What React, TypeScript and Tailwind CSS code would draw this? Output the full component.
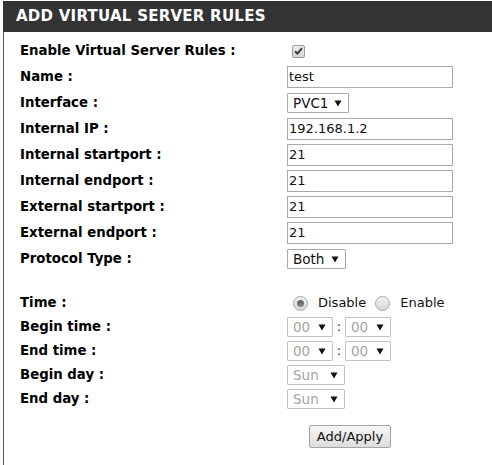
import React from 'react';

const font = { fontFamily: '"DejaVu Sans", Verdana, sans-serif' };

const Arrow = () => (
  <svg width="8" height="7" viewBox="0 0 8 7" className="shrink-0">
    <path d="M0.5 0.5 L7.5 0.5 L4 6.5 Z" fill="#111" />
  </svg>
);

const TextBox = ({ value }: { value: string }) => (
  <div className="w-[166px] h-[22px] border border-[#a9a9a9] bg-white pl-[1px] flex items-center text-[13px] text-[#111]">
    {value}
  </div>
);

const Select = ({
  value,
  width,
  disabled,
}: {
  value: string;
  width: string;
  disabled?: boolean;
}) => (
  <div
    className={`${width} h-[20px] border bg-white pl-[5px] pr-[6px] flex items-center justify-between text-[13.5px] rounded-[1px] ${
      disabled ? 'border-[#c2c2c2] text-[#a8a39c]' : 'border-[#a9a9a9] text-[#111]'
    }`}
  >
    <span>{value}</span>
    <Arrow />
  </div>
);

const Radio = ({ checked }: { checked?: boolean }) => (
  <div className="w-[15px] h-[15px] rounded-full border border-[#a8a8a8] bg-gradient-to-b from-[#f4f4f4] to-[#d6d6d6] flex items-center justify-center">
    {checked && <div className="w-[7px] h-[7px] rounded-full bg-gradient-to-b from-[#5a5a5a] to-[#8a8a8a]" />}
  </div>
);

const Row = ({
  label,
  tall = true,
  children,
}: {
  label: string;
  tall?: boolean;
  children?: React.ReactNode;
}) => (
  <div className={`flex items-center ${tall ? 'h-[26px]' : 'h-[24px]'}`}>
    <div className="w-[267px] font-bold text-[13.3px] text-black">{label}</div>
    <div className="flex items-center">{children}</div>
  </div>
);

export default function App() {
  return (
    <div className="w-[492px] h-[465px] bg-white pt-[1px] pl-[3px] overflow-hidden" style={font}>
      <div className="h-[31px] bg-[#333333] flex items-center pl-[13px]">
        <span className="text-white font-bold text-[15px] tracking-[0.25px]">ADD VIRTUAL SERVER RULES</span>
      </div>
      <div className="border-l border-[#555] h-[433px] pl-[16px] pt-[6px]">
        <Row label="Enable Virtual Server Rules :">
          <div className="ml-[5px] w-[13px] h-[13px] border border-[#9c9c9c] rounded-[2px] bg-gradient-to-b from-[#ededed] to-[#d4d4d4] flex items-center justify-center">
            <svg width="9" height="8" viewBox="0 0 9 8">
              <path d="M1 4.2 L3.4 6.6 L8 1.2" stroke="#3a3a3a" strokeWidth="2" fill="none" />
            </svg>
          </div>
        </Row>
        <Row label="Name :">
          <TextBox value="test" />
        </Row>
        <Row label="Interface :">
          <Select value="PVC1" width="w-[62px]" />
        </Row>
        <Row label="Internal IP :">
          <TextBox value="192.168.1.2" />
        </Row>
        <Row label="Internal startport :">
          <TextBox value="21" />
        </Row>
        <Row label="Internal endport :">
          <TextBox value="21" />
        </Row>
        <Row label="External startport :">
          <TextBox value="21" />
        </Row>
        <Row label="External endport :">
          <TextBox value="21" />
        </Row>
        <Row label="Protocol Type :">
          <Select value="Both" width="w-[59px]" />
        </Row>

        <div className="h-[19px]" />

        <Row label="Time :" tall={false}>
          <div className="ml-[6px] flex items-center text-[13px] text-[#111]">
            <Radio checked />
            <span className="ml-[10px]">Disable</span>
            <span className="ml-[9px]">
              <Radio />
            </span>
            <span className="ml-[10px]">Enable</span>
          </div>
        </Row>
        <Row label="Begin time :" tall={false}>
          <Select value="00" width="w-[46px]" disabled />
          <span className="w-[12px] text-center text-[13px] text-[#111]">:</span>
          <Select value="00" width="w-[46px]" disabled />
        </Row>
        <Row label="End time :" tall={false}>
          <Select value="00" width="w-[46px]" disabled />
          <span className="w-[12px] text-center text-[13px] text-[#111]">:</span>
          <Select value="00" width="w-[46px]" disabled />
        </Row>
        <Row label="Begin day :" tall={false}>
          <Select value="Sun" width="w-[58px]" disabled />
        </Row>
        <Row label="End day :" tall={false}>
          <Select value="Sun" width="w-[58px]" disabled />
        </Row>

        <div className="mt-[14px] ml-[289px]">
          <button className="w-[82px] h-[23px] border border-[#a3a3a3] rounded-[2px] bg-gradient-to-b from-[#f6f6f6] to-[#dddddd] text-[13px] text-[#111] flex items-center justify-center">
            Add/Apply
          </button>
        </div>
      </div>
    </div>
  );
}
